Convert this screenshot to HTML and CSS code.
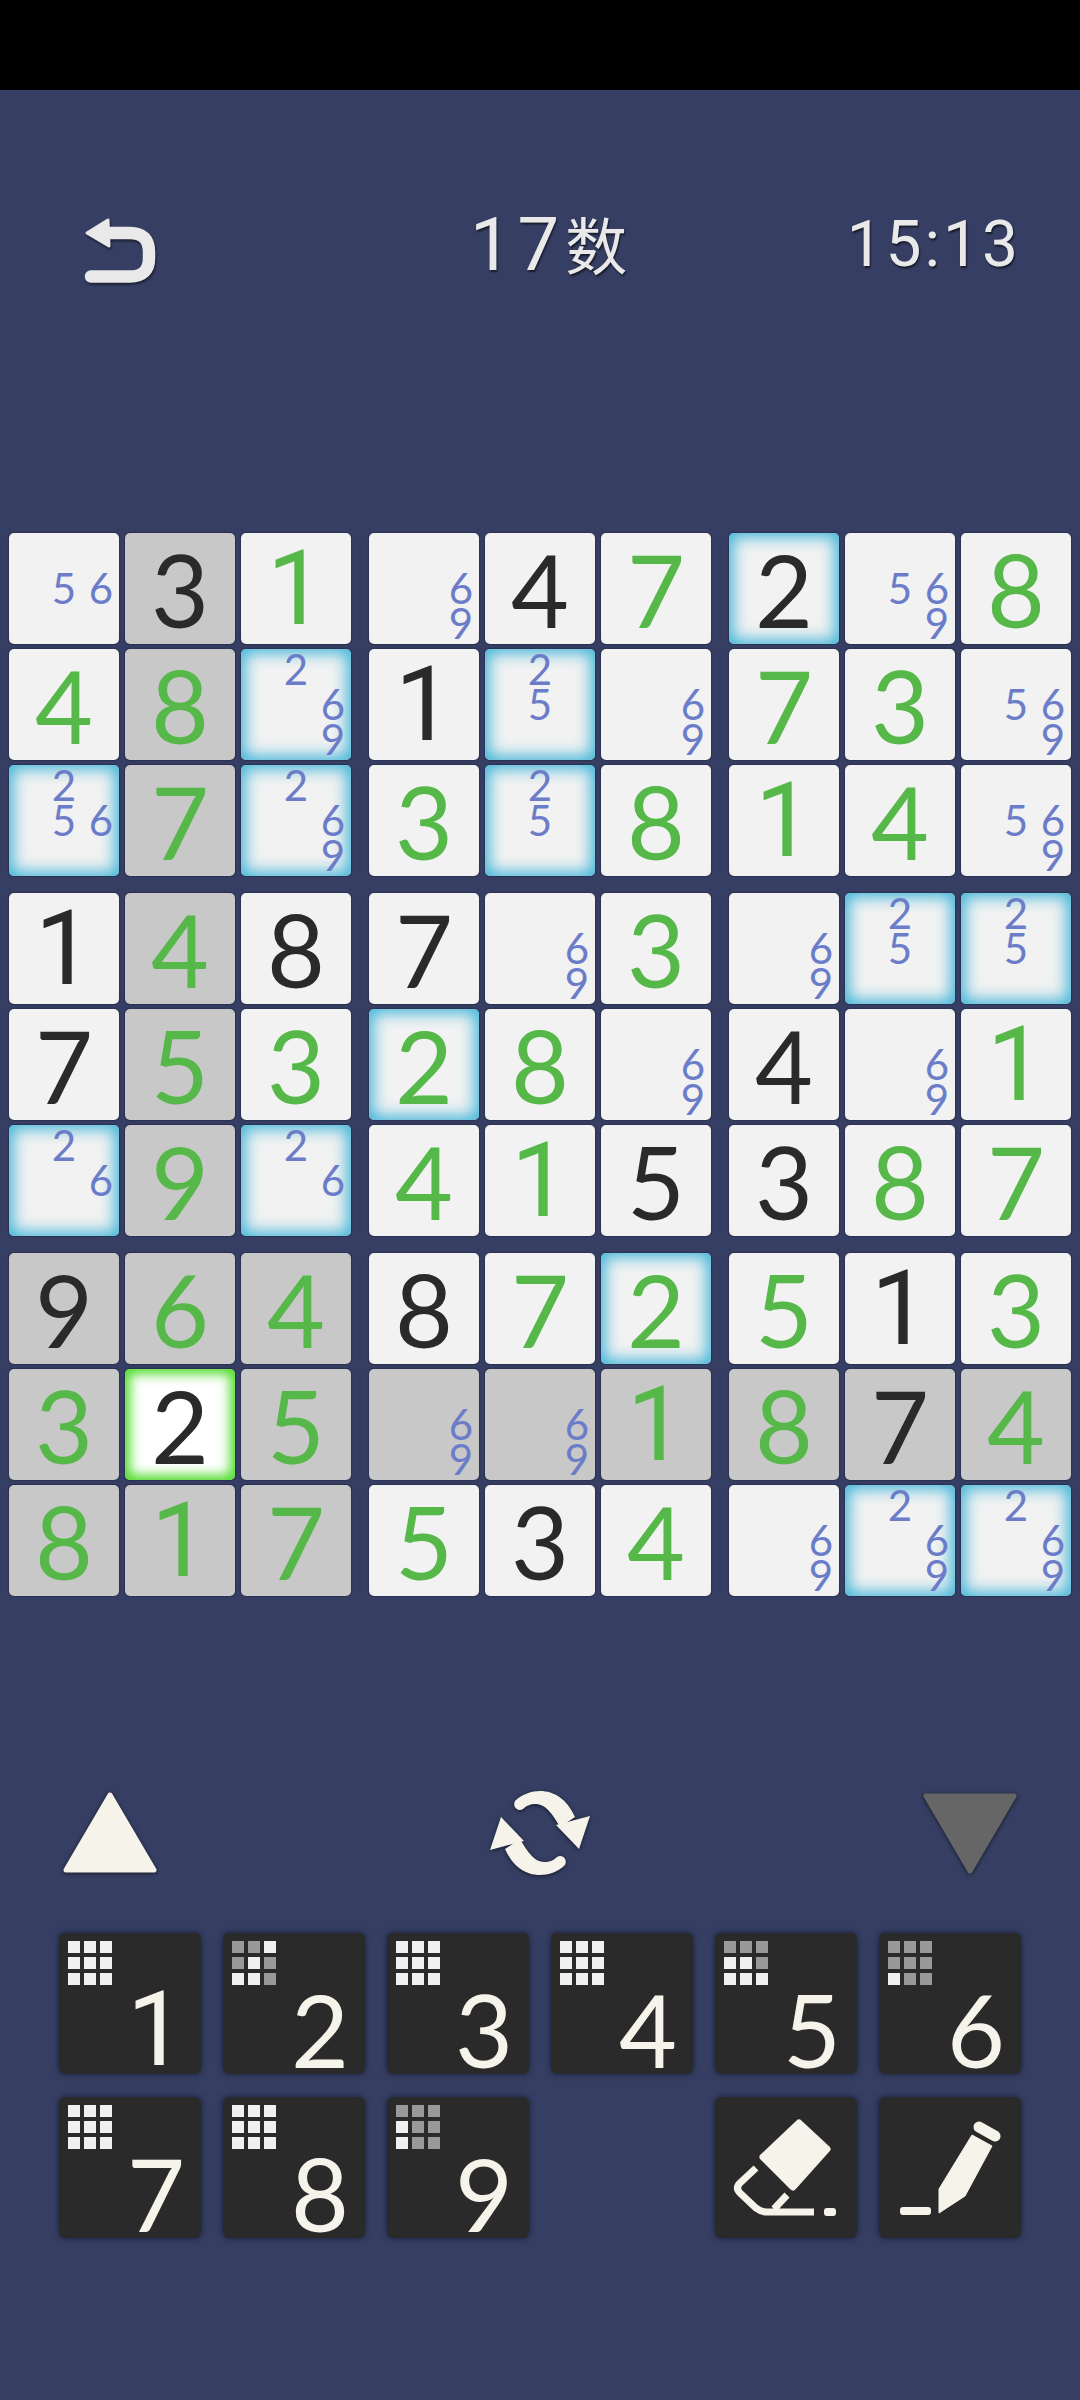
FILE: index.html
```html
<!DOCTYPE html>
<html lang="zh">
<head>
<meta charset="UTF-8">
<meta name="viewport" content="width=device-width, initial-scale=1.0">
<title>17数</title>
<link rel="stylesheet" href="styles.css">
</head>
<body>

<div class="statusbar"></div>

<div class="header">
  <svg class="back" viewBox="0 0 73 66">
    <polygon points="3,16 24,3 25,29" fill="#e9e9e9" stroke="#e9e9e9" stroke-width="3" stroke-linejoin="round"/>
    <path d="M24 16 H46 Q65 16 65 35 V41 Q65 59.5 46 59.5 H7" fill="none" stroke="#e9e9e9" stroke-width="12.5" stroke-linecap="round"/>
  </svg>
  <div class="title">17<span class="kanji">数</span></div>
  <div class="time">15:13</div>
</div>

<div class="board">
  <!-- box 1 -->
  <div class="box">
    <div class="cell notes"><span class="n5">5</span><span class="n6">6</span></div>
    <div class="cell dim given">3</div>
    <div class="cell one">1</div>
    <div class="cell">4</div>
    <div class="cell dim">8</div>
    <div class="cell notes glow"><span class="n2">2</span><span class="n6">6</span><span class="n9">9</span></div>
    <div class="cell notes glow"><span class="n2">2</span><span class="n5">5</span><span class="n6">6</span></div>
    <div class="cell dim">7</div>
    <div class="cell notes glow"><span class="n2">2</span><span class="n6">6</span><span class="n9">9</span></div>
  </div>
  <!-- box 2 -->
  <div class="box">
    <div class="cell notes"><span class="n6">6</span><span class="n9">9</span></div>
    <div class="cell given">4</div>
    <div class="cell">7</div>
    <div class="cell given one">1</div>
    <div class="cell notes glow"><span class="n2">2</span><span class="n5">5</span></div>
    <div class="cell notes"><span class="n6">6</span><span class="n9">9</span></div>
    <div class="cell">3</div>
    <div class="cell notes glow"><span class="n2">2</span><span class="n5">5</span></div>
    <div class="cell">8</div>
  </div>
  <!-- box 3 -->
  <div class="box">
    <div class="cell given glow">2</div>
    <div class="cell notes"><span class="n5">5</span><span class="n6">6</span><span class="n9">9</span></div>
    <div class="cell">8</div>
    <div class="cell">7</div>
    <div class="cell">3</div>
    <div class="cell notes"><span class="n5">5</span><span class="n6">6</span><span class="n9">9</span></div>
    <div class="cell one">1</div>
    <div class="cell">4</div>
    <div class="cell notes"><span class="n5">5</span><span class="n6">6</span><span class="n9">9</span></div>
  </div>
  <!-- box 4 -->
  <div class="box">
    <div class="cell given one">1</div>
    <div class="cell dim">4</div>
    <div class="cell given">8</div>
    <div class="cell given">7</div>
    <div class="cell dim">5</div>
    <div class="cell">3</div>
    <div class="cell notes glow"><span class="n2">2</span><span class="n6">6</span></div>
    <div class="cell dim">9</div>
    <div class="cell notes glow"><span class="n2">2</span><span class="n6">6</span></div>
  </div>
  <!-- box 5 -->
  <div class="box">
    <div class="cell given">7</div>
    <div class="cell notes"><span class="n6">6</span><span class="n9">9</span></div>
    <div class="cell">3</div>
    <div class="cell glow">2</div>
    <div class="cell">8</div>
    <div class="cell notes"><span class="n6">6</span><span class="n9">9</span></div>
    <div class="cell">4</div>
    <div class="cell one">1</div>
    <div class="cell given">5</div>
  </div>
  <!-- box 6 -->
  <div class="box">
    <div class="cell notes"><span class="n6">6</span><span class="n9">9</span></div>
    <div class="cell notes glow"><span class="n2">2</span><span class="n5">5</span></div>
    <div class="cell notes glow"><span class="n2">2</span><span class="n5">5</span></div>
    <div class="cell given">4</div>
    <div class="cell notes"><span class="n6">6</span><span class="n9">9</span></div>
    <div class="cell one">1</div>
    <div class="cell given">3</div>
    <div class="cell">8</div>
    <div class="cell">7</div>
  </div>
  <!-- box 7 -->
  <div class="box">
    <div class="cell dim given">9</div>
    <div class="cell dim">6</div>
    <div class="cell dim">4</div>
    <div class="cell dim">3</div>
    <div class="cell given selected">2</div>
    <div class="cell dim">5</div>
    <div class="cell dim">8</div>
    <div class="cell dim one">1</div>
    <div class="cell dim">7</div>
  </div>
  <!-- box 8 -->
  <div class="box">
    <div class="cell given">8</div>
    <div class="cell">7</div>
    <div class="cell glow">2</div>
    <div class="cell notes dim"><span class="n6">6</span><span class="n9">9</span></div>
    <div class="cell notes dim"><span class="n6">6</span><span class="n9">9</span></div>
    <div class="cell dim one">1</div>
    <div class="cell">5</div>
    <div class="cell given">3</div>
    <div class="cell">4</div>
  </div>
  <!-- box 9 -->
  <div class="box">
    <div class="cell">5</div>
    <div class="cell given one">1</div>
    <div class="cell">3</div>
    <div class="cell dim">8</div>
    <div class="cell dim given">7</div>
    <div class="cell dim">4</div>
    <div class="cell notes"><span class="n6">6</span><span class="n9">9</span></div>
    <div class="cell notes glow"><span class="n2">2</span><span class="n6">6</span><span class="n9">9</span></div>
    <div class="cell notes glow"><span class="n2">2</span><span class="n6">6</span><span class="n9">9</span></div>
  </div>
</div>

<div class="controls">
  <svg class="tri" viewBox="0 0 94 82">
    <polygon points="47,3 91,78 3,78" fill="#f6f3ea" stroke="#f6f3ea" stroke-width="5" stroke-linejoin="round"/>
  </svg>
  <svg class="sync" viewBox="0 0 100 84">
    <g fill="#f6f3ea">
      <path d="M25 10 C32 3 42 0 50 0 C64 0 77 8 85 26 L70 36 C62 22 55 13 46 13 C40 13 36 15 33 18 C28 21 22 16 25 10 Z"/>
      <polygon points="66,34 100,25 89,58"/>
    </g>
    <g fill="#f6f3ea" transform="rotate(180 50 42)">
      <path d="M25 10 C32 3 42 0 50 0 C64 0 77 8 85 26 L70 36 C62 22 55 13 46 13 C40 13 36 15 33 18 C28 21 22 16 25 10 Z"/>
      <polygon points="66,34 100,25 89,58"/>
    </g>
  </svg>
  <svg class="tri" viewBox="0 0 94 82">
    <polygon points="3,4 91,4 47,79" fill="#666666" stroke="#666666" stroke-width="5" stroke-linejoin="round"/>
  </svg>
</div>

<div class="keypad">
  <div class="key">
    <div class="mini"><i></i><i></i><i></i><i></i><i></i><i></i><i></i><i></i><i></i></div>
    <div class="num one">1</div>
  </div>
  <div class="key">
    <div class="mini"><i class="off"></i><i class="off"></i><i></i><i class="off"></i><i></i><i class="off"></i><i></i><i></i><i class="off"></i></div>
    <div class="num">2</div>
  </div>
  <div class="key">
    <div class="mini"><i></i><i></i><i></i><i></i><i></i><i></i><i></i><i></i><i></i></div>
    <div class="num">3</div>
  </div>
  <div class="key">
    <div class="mini"><i></i><i></i><i></i><i></i><i></i><i></i><i></i><i></i><i></i></div>
    <div class="num">4</div>
  </div>
  <div class="key">
    <div class="mini"><i class="off"></i><i class="off"></i><i class="off"></i><i></i><i></i><i class="off"></i><i></i><i></i><i></i></div>
    <div class="num">5</div>
  </div>
  <div class="key">
    <div class="mini"><i class="off"></i><i class="off"></i><i class="off"></i><i class="off"></i><i class="off"></i><i class="off"></i><i></i><i class="off"></i><i class="off"></i></div>
    <div class="num">6</div>
  </div>
  <div class="key">
    <div class="mini"><i></i><i></i><i></i><i></i><i></i><i></i><i></i><i></i><i></i></div>
    <div class="num">7</div>
  </div>
  <div class="key">
    <div class="mini"><i></i><i></i><i></i><i></i><i></i><i></i><i></i><i></i><i></i></div>
    <div class="num">8</div>
  </div>
  <div class="key">
    <div class="mini"><i class="off"></i><i class="off"></i><i class="off"></i><i></i><i class="off"></i><i class="off"></i><i></i><i class="off"></i><i class="off"></i></div>
    <div class="num">9</div>
  </div>
  <div class="key tool first-tool">
    <svg viewBox="0 0 142 141">
      <polygon points="84,26 112,52 78,90 48,60" fill="#f6f3ea" stroke="#f6f3ea" stroke-width="7" stroke-linejoin="round"/>
      <path d="M41 71 L25 86 Q20 91 25 96 L41 111 Q46 115 52 115 H99 M59 112 L72 98" fill="none" stroke="#f6f3ea" stroke-width="7"/>
      <rect x="109" y="111" width="12" height="8" rx="3" fill="#f6f3ea"/>
    </svg>
  </div>
  <div class="key tool">
    <svg viewBox="0 0 142 141">
      <polygon points="93,38 113,49 86,99 60,116 60,92" fill="#f6f3ea" stroke="#f6f3ea" stroke-width="1" stroke-linejoin="round"/>
      <line x1="100" y1="30" x2="116" y2="39" stroke="#f6f3ea" stroke-width="11" stroke-linecap="round"/>
      <rect x="21" y="110" width="31" height="8" rx="3" fill="#f6f3ea"/>
    </svg>
  </div>
</div>

</body>
</html>
```

FILE: styles.css
```css
body {
  margin: 0;
  height: 2400px;
  overflow: hidden;
  background-color: #363f63;
  font-family: "Lato", "Noto Sans CJK SC", sans-serif;
}
.statusbar {
  height: 90px;
  background: #000000;
}

/* top row */
.header {
  display: grid;
  grid-template-columns: 386px 1fr auto;
  align-items: start;
  height: 66px;
  margin-top: 127px;
  padding: 0 59px 0 84px;
  color: #e9e9e9;
  font-family: "Roboto", "Noto Sans CJK SC", sans-serif;
  text-shadow: 1px 2px 2px rgba(0, 0, 0, 0.6);
}
.back {
  width: 73px;
  height: 66px;
  filter: drop-shadow(1px 2px 1px rgba(0, 0, 0, 0.5));
}
.title {
  font-size: 74px;
  line-height: 56px;
  letter-spacing: 6px;
}
.kanji {
  font-size: 62px;
  letter-spacing: 0;
}
.time {
  font-size: 64px;
  line-height: 56px;
  letter-spacing: 3px;
}

/* board */
.board {
  display: grid;
  grid-template-columns: repeat(3, 342px);
  grid-template-rows: repeat(3, 343px);
  gap: 17px 18px;
  margin-top: 250px;
  padding-left: 9px;
}
.box {
  display: grid;
  grid-template-columns: repeat(3, 110px);
  grid-template-rows: repeat(3, 111px);
  gap: 5px 6px;
}
.cell {
  display: flex;
  align-items: center;
  justify-content: center;
  background: #f2f2f2;
  border-radius: 5px;
  box-shadow: 0 0 2px rgba(10, 15, 35, 0.9);
  color: #55b848;
  font-size: 100px;
  line-height: 1;
}
.cell.dim {
  background: #c8c8c8;
}
.cell.given {
  color: #2a2a2a;
}
.cell.glow {
  box-shadow: 0 0 2px rgba(10, 15, 35, 0.9), inset 0 0 16px 4px #3fb4d8;
}
.cell.selected {
  background: #ffffff;
  box-shadow: 0 0 2px rgba(10, 15, 35, 0.9), inset 0 0 12px 5px #4fdc2a;
}
/* Lato's 1 has a foot, the game's doesn't */
.one {
  font-family: "Roboto", sans-serif;
  font-size: 103px !important;
}

/* pencil marks sit at their own spot in a 3x3 */
.cell.notes {
  display: grid;
  grid-template-columns: repeat(3, 37px);
  grid-template-rows: repeat(3, 35px);
  align-content: center;
  justify-content: center;
  color: #6b7cc8;
  font-size: 42px;
}
.cell.notes span {
  text-align: center;
  line-height: 35px;
}
.n2 { grid-area: 1 / 2; }
.n5 { grid-area: 2 / 2; }
.n6 { grid-area: 2 / 3; }
.n9 { grid-area: 3 / 3; }

/* up / sync / down */
.controls {
  display: flex;
  justify-content: space-between;
  align-items: center;
  height: 84px;
  margin-top: 195px;
  padding: 0 63px;
}
.tri {
  width: 94px;
  height: 82px;
  filter: drop-shadow(0 1px 2px rgba(0, 0, 0, 0.6));
}
.sync {
  width: 100px;
  height: 84px;
  filter: drop-shadow(0 1px 2px rgba(0, 0, 0, 0.6));
}

/* number keys */
.keypad {
  display: grid;
  grid-template-columns: repeat(6, 142px);
  grid-auto-rows: 141px;
  gap: 23px 22px;
  margin-top: 58px;
  padding-left: 59px;
}
.key {
  display: flex;
  flex-direction: column;
  justify-content: space-between;
  box-sizing: border-box;
  padding: 8px 16px 8px 9px;
  background: #2a2a2a;
  border-radius: 6px;
  box-shadow: 0 0 6px rgba(15, 20, 45, 0.8);
}
.key.first-tool {
  grid-column: 5;
}
.key.tool {
  padding: 0;
}
.key.tool svg {
  width: 142px;
  height: 141px;
}
.mini {
  display: grid;
  grid-template-columns: repeat(3, 12px);
  grid-auto-rows: 12px;
  gap: 4px;
}
.mini i {
  background: #f0f0f0;
}
.mini i.off {
  background: #999999;
}
.num {
  align-self: flex-end;
  color: #f6f3ea;
  font-size: 100px;
  line-height: 73px;
}
```
